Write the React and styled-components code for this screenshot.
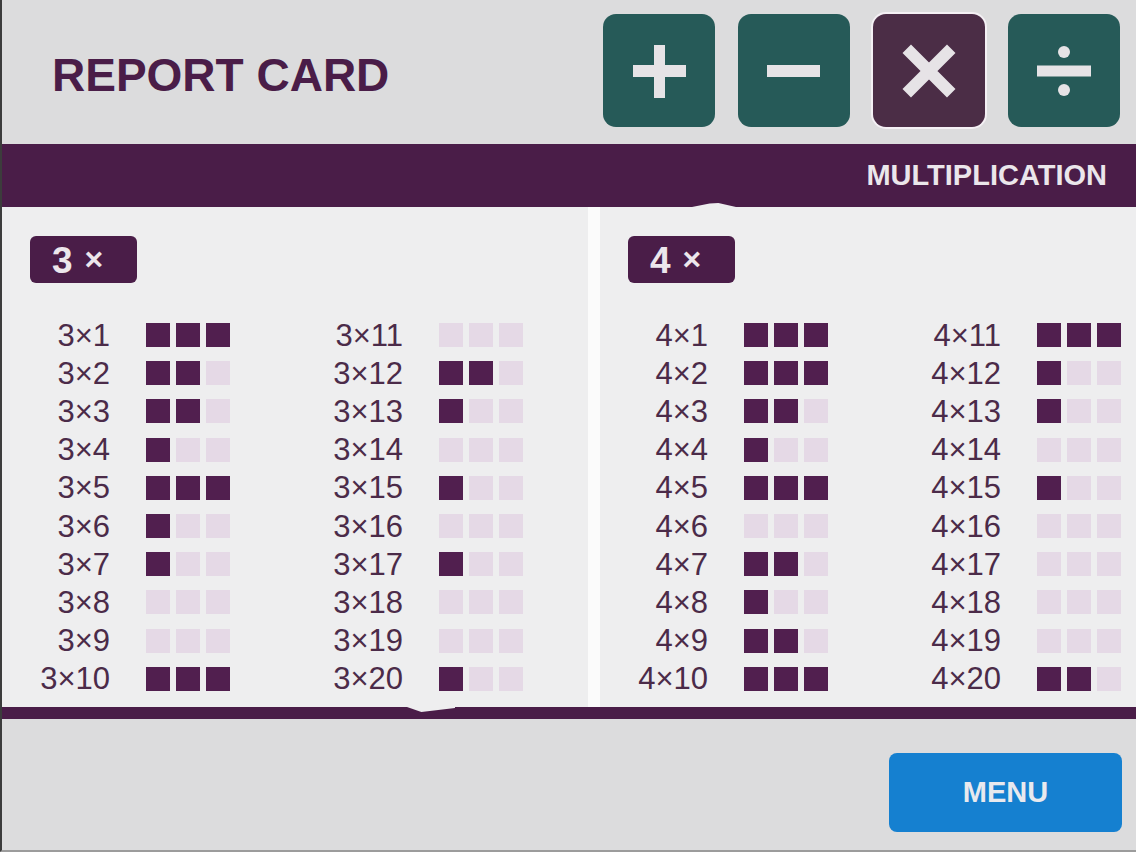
import React from 'react';
import styled, { createGlobalStyle, css } from 'styled-components';

const COLORS = {
  page: '#dcdcdd',
  panel: '#eeeeef',
  stripe: '#fbfbfb',
  purple: '#4a1d48',
  text: '#4b2b49',
  green: '#265a58',
  activeOp: '#4b2d46',
  icon: '#e6e3e6',
  filled: '#511f4f',
  empty: '#e5d9e6',
  blue: '#1580d0',
};

const GlobalStyle = createGlobalStyle`
  html, body {
    margin: 0;
    padding: 0;
    background: ${COLORS.page};
  }
  body {
    font-family: "Liberation Sans", Arial, sans-serif;
  }
  * { box-sizing: border-box; }
`;

const Page = styled.div`
  width: 1136px;
  height: 852px;
  display: flex;
  flex-direction: column;
  background: ${COLORS.page};
  border-left: 2px solid #3c3c3c;
  border-bottom: 2px solid #9c9c9c;
  overflow: hidden;
`;

const Header = styled.header`
  height: 144px;
  display: flex;
  justify-content: space-between;
  align-items: flex-start;
  padding: 0 16px 0 50px;
`;

const Title = styled.h1`
  margin: 48px 0 0;
  font-size: 46px;
  font-weight: 700;
  color: ${COLORS.purple};
  letter-spacing: 0;
`;

const OpRow = styled.div`
  display: flex;
  gap: 23px;
  padding-top: 14px;
`;

const OpButton = styled.button`
  width: 112px;
  height: 113px;
  padding: 0;
  border: none;
  border-radius: 13px;
  background: ${COLORS.green};
  display: flex;
  align-items: center;
  justify-content: center;
  cursor: pointer;

  ${p => p.active && css`
    background: ${COLORS.activeOp};
    box-shadow: 0 0 0 2px #f4f0f4;
  `}
`;

const Band = styled.div`
  position: relative;
  height: 63px;
  background: ${COLORS.purple};
  display: flex;
  align-items: center;
  justify-content: flex-end;
  padding-right: 29px;

  &::after {
    content: '';
    position: absolute;
    left: 690px;
    bottom: 0;
    width: 44px;
    height: 4px;
    background: ${COLORS.panel};
    clip-path: polygon(0 100%, 40% 15%, 60% 0, 100% 100%);
  }
`;

const BandTitle = styled.span`
  font-size: 29px;
  font-weight: 700;
  color: #ebe6eb;
`;

const Content = styled.main`
  height: 500px;
  display: flex;
  background: ${COLORS.panel};
`;

const Panel = styled.section`
  width: ${p => p.width};
  flex: ${p => (p.width ? 'none' : '1')};
  padding: 29px 0 0 28px;
  background: ${COLORS.panel};
`;

const Stripe = styled.div`
  width: 12px;
  background: ${COLORS.stripe};
`;

const Tag = styled.div`
  width: 107px;
  height: 47px;
  border-radius: 6px;
  background: ${COLORS.purple};
  color: #ece6ec;
  font-size: 37px;
  font-weight: 700;
  display: flex;
  align-items: center;
  padding: 2px 0 0 22px;
  gap: 12px;
`;

const Cross = styled.span`
  font-size: 32px;
  margin-top: -3px;
`;

const Tables = styled.div`
  display: flex;
  gap: 93px;
  margin-top: 33px;
`;

const Column = styled.div`
  display: flex;
  flex-direction: column;
`;

const Row = styled.div`
  height: 38.2px;
  display: grid;
  grid-template-columns: 80px 84px;
  column-gap: 36px;
  align-items: center;
`;

const Label = styled.span`
  text-align: right;
  font-size: 31px;
  color: ${COLORS.text};
  white-space: nowrap;
  line-height: 1;
`;

const Squares = styled.div`
  display: flex;
  gap: 6px;
`;

const Square = styled.span`
  width: 24px;
  height: 24px;
  background: ${p => (p.on ? COLORS.filled : COLORS.empty)};
`;

const BottomBand = styled.div`
  position: relative;
  height: 12px;
  background: ${COLORS.purple};

  &::before {
    content: '';
    position: absolute;
    left: 405px;
    top: 0;
    width: 48px;
    height: 5px;
    background: ${COLORS.panel};
    clip-path: polygon(0 0, 100% 0, 100% 20%, 30% 100%);
  }
`;

const Footer = styled.footer`
  flex: 1;
  display: flex;
  justify-content: flex-end;
  align-items: flex-start;
  padding: 34px 14px 0 0;
`;

const MenuButton = styled.button`
  width: 233px;
  height: 79px;
  border: none;
  border-radius: 8px;
  background: ${COLORS.blue};
  color: #e8e9ee;
  font-family: inherit;
  font-size: 29px;
  font-weight: 700;
  cursor: pointer;
`;

const ICON = COLORS.icon;

const PlusIcon = () => (
  <svg width="112" height="112" viewBox="0 0 112 112">
    <rect x="30" y="50" width="53" height="12" fill={ICON} />
    <rect x="51" y="30" width="11" height="53" fill={ICON} />
  </svg>
);

const MinusIcon = () => (
  <svg width="112" height="112" viewBox="0 0 112 112">
    <rect x="29" y="50" width="53" height="12" fill={ICON} />
  </svg>
);

const TimesIcon = () => (
  <svg width="112" height="112" viewBox="0 0 112 112">
    <path d="M38 38 L74 74 M74 38 L38 74" stroke={ICON} strokeWidth="12" strokeLinecap="square" />
  </svg>
);

const DivideIcon = () => (
  <svg width="112" height="112" viewBox="0 0 112 112">
    <rect x="29" y="50.5" width="54" height="11" fill={ICON} />
    <circle cx="56" cy="37" r="6" fill={ICON} />
    <circle cx="56" cy="75" r="6" fill={ICON} />
  </svg>
);

const scores = {
  3: [3, 2, 2, 1, 3, 1, 1, 0, 0, 3, 0, 2, 1, 0, 1, 0, 1, 0, 0, 1],
  4: [3, 3, 2, 1, 3, 0, 2, 1, 2, 3, 3, 1, 1, 0, 1, 0, 0, 0, 0, 2],
};

const TableColumn = ({ base, from, values }) => (
  <Column>
    {values.map((v, i) => (
      <Row key={i}>
        <Label>{base}×{from + i}</Label>
        <Squares>
          {[0, 1, 2].map(k => <Square key={k} on={k < v} />)}
        </Squares>
      </Row>
    ))}
  </Column>
);

const TablePanel = ({ base, width }) => (
  <Panel width={width}>
    <Tag>{base}<Cross>×</Cross></Tag>
    <Tables>
      <TableColumn base={base} from={1} values={scores[base].slice(0, 10)} />
      <TableColumn base={base} from={11} values={scores[base].slice(10)} />
    </Tables>
  </Panel>
);

export default function App() {
  return (
    <>
      <GlobalStyle />
      <Page>
        <Header>
          <Title>REPORT CARD</Title>
          <OpRow>
            <OpButton aria-label="addition"><PlusIcon /></OpButton>
            <OpButton aria-label="subtraction"><MinusIcon /></OpButton>
            <OpButton aria-label="multiplication" active><TimesIcon /></OpButton>
            <OpButton aria-label="division"><DivideIcon /></OpButton>
          </OpRow>
        </Header>
        <Band>
          <BandTitle>MULTIPLICATION</BandTitle>
        </Band>
        <Content>
          <TablePanel base={3} width="586px" />
          <Stripe />
          <TablePanel base={4} />
        </Content>
        <BottomBand />
        <Footer>
          <MenuButton>MENU</MenuButton>
        </Footer>
      </Page>
    </>
  );
}
